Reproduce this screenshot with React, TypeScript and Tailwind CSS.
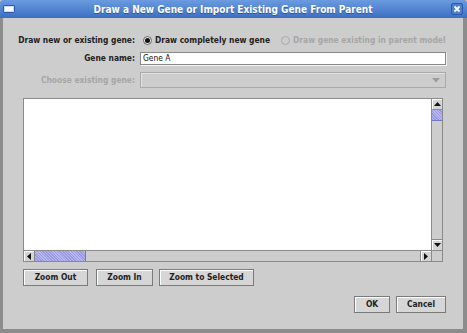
import React from "react";

const hatch =
  "repeating-linear-gradient(45deg, #9a9ae0 0px, #9a9ae0 1px, #b6b6f0 1px, #b6b6f0 2px)";

function Btn({ children, className = "" }: { children: React.ReactNode; className?: string }) {
  return (
    <div
      className={
        "h-[17px] flex items-center justify-center border border-[#7a7a7a] bg-[#d6d6d6] shadow-[inset_1px_1px_0_#ffffff] text-[#222] whitespace-nowrap " +
        className
      }
    >
      {children}
    </div>
  );
}

export default function App() {
  return (
    <div
      className="w-[467px] h-[333px] flex flex-col bg-[#cdcdcd] text-[8.4px] font-bold text-[#222] overflow-hidden whitespace-nowrap"
      style={{ fontFamily: "'DejaVu Sans Condensed', 'DejaVu Sans', sans-serif" }}
    >
      {/* Title bar */}
      <div className="h-[18px] shrink-0 flex items-center bg-gradient-to-b from-[#6b9be0] to-[#3b6fc2] rounded-t-[3px] px-[3px] relative">
        <div className="w-[12px] h-[8px] border border-[#2b5aa8] bg-white shadow-[inset_0_0_0_1px_#c9d9f2] rounded-[1px]" />
        <div className="flex-1 text-center text-white text-[10px] [text-shadow:0_1px_0_#2c579a]">
          Draw a New Gene or Import Existing Gene From Parent
        </div>
        <div className="w-[12px] h-[12px] border border-[#2a5aa6] bg-[#4a7fcf] rounded-[2px] flex items-center justify-center mr-[1px]">
          <svg width="8" height="8" viewBox="0 0 8 8">
            <path d="M1.5 1.5 L6.5 6.5 M6.5 1.5 L1.5 6.5" stroke="white" strokeWidth="1.8" />
          </svg>
        </div>
      </div>

      {/* Body */}
      <div className="flex-1 flex flex-col border-l-[3px] border-r-[4px] border-b-[4px] border-[#8c8c8c] pr-[17px]">
        {/* Form rows */}
        <div className="grid grid-cols-[132px_1fr] gap-x-[5px] mt-[15px] items-center">
          <div className="text-right h-[14px] leading-[14px]">Draw new or existing gene:</div>
          <div className="flex items-center h-[14px]">
            <div className="ml-[3px] w-[9px] h-[9px] rounded-full border border-[#666] bg-[#e8e8e8] flex items-center justify-center">
              <div className="w-[5px] h-[5px] rounded-full bg-[#111]" />
            </div>
            <span className="ml-[3px]">Draw completely new gene</span>
            <div className="ml-[11px] w-[9px] h-[9px] rounded-full border border-[#a8a8a8]" />
            <span className="ml-[3px] text-[#a6a6a6]">Draw gene existing in parent model</span>
          </div>

          <div className="text-right mt-[5px]">Gene name:</div>
          <div className="mt-[5px] h-[13px] border border-[#888] bg-white shadow-[1px_1px_0_#f4f4f4] flex items-center pl-[2px] font-normal text-[#111]">
            Gene A
          </div>

          <div className="text-right text-[#a6a6a6] mt-[7px]">Choose existing gene:</div>
          <div className="mt-[7px] h-[16px] border border-[#aaa] bg-[#cdcdcd] shadow-[inset_1px_1px_0_#e2e2e2] flex items-center justify-end pr-[5px]">
            <svg width="8" height="5" viewBox="0 0 8 5">
              <path d="M0 0 H8 L4 4.5 Z" fill="#9a9a9a" />
            </svg>
          </div>
        </div>

        {/* Canvas scroll pane */}
        <div className="ml-[20px] mr-[3px] mt-[10px] h-[164px] border border-[#8a8a8a] flex flex-col">
          <div className="flex-1 flex min-h-0">
            <div className="flex-1 bg-white" />
            <div className="w-[11px] flex flex-col border-l border-[#8a8a8a] bg-[#cdcdcd]">
              <div className="h-[11px] border-b border-[#8a8a8a] flex items-center justify-center bg-[#d4d4d4] shadow-[inset_1px_1px_0_#fff]">
                <svg width="7" height="4" viewBox="0 0 7 4">
                  <path d="M0 4 H7 L3.5 0 Z" fill="#111" />
                </svg>
              </div>
              <div className="h-[11px] border-b border-[#7676c0]" style={{ backgroundImage: hatch }} />
              <div className="flex-1" />
              <div className="h-[11px] border-t border-[#8a8a8a] flex items-center justify-center bg-[#d4d4d4] shadow-[inset_1px_1px_0_#fff]">
                <svg width="7" height="4" viewBox="0 0 7 4">
                  <path d="M0 0 H7 L3.5 4 Z" fill="#111" />
                </svg>
              </div>
            </div>
          </div>
          <div className="h-[11px] flex border-t border-[#8a8a8a]">
            <div className="flex-1 flex bg-[#cdcdcd]">
              <div className="w-[11px] border-r border-[#8a8a8a] flex items-center justify-center bg-[#d4d4d4] shadow-[inset_1px_1px_0_#fff]">
                <svg width="4" height="7" viewBox="0 0 4 7">
                  <path d="M4 0 V7 L0 3.5 Z" fill="#111" />
                </svg>
              </div>
              <div className="w-[51px] border-r border-[#7676c0]" style={{ backgroundImage: hatch }} />
              <div className="flex-1" />
              <div className="w-[11px] border-l border-[#8a8a8a] flex items-center justify-center bg-[#d4d4d4] shadow-[inset_1px_1px_0_#fff]">
                <svg width="4" height="7" viewBox="0 0 4 7">
                  <path d="M0 0 V7 L4 3.5 Z" fill="#111" />
                </svg>
              </div>
            </div>
            <div className="w-[11px] border-l border-[#8a8a8a] bg-[#cdcdcd]" />
          </div>
        </div>

        {/* Zoom buttons */}
        <div className="flex gap-[7px] ml-[20px] mt-[7px]">
          <Btn className="w-[65px]">Zoom Out</Btn>
          <Btn className="w-[57px] ml-[1px]">Zoom In</Btn>
          <Btn className="w-[95px] -ml-[1px]">Zoom to Selected</Btn>
        </div>

        {/* OK / Cancel */}
        <div className="flex justify-end gap-[6px] mt-[10px]">
          <Btn className="w-[36px]">OK</Btn>
          <Btn className="w-[50px]">Cancel</Btn>
        </div>
      </div>
    </div>
  );
}
